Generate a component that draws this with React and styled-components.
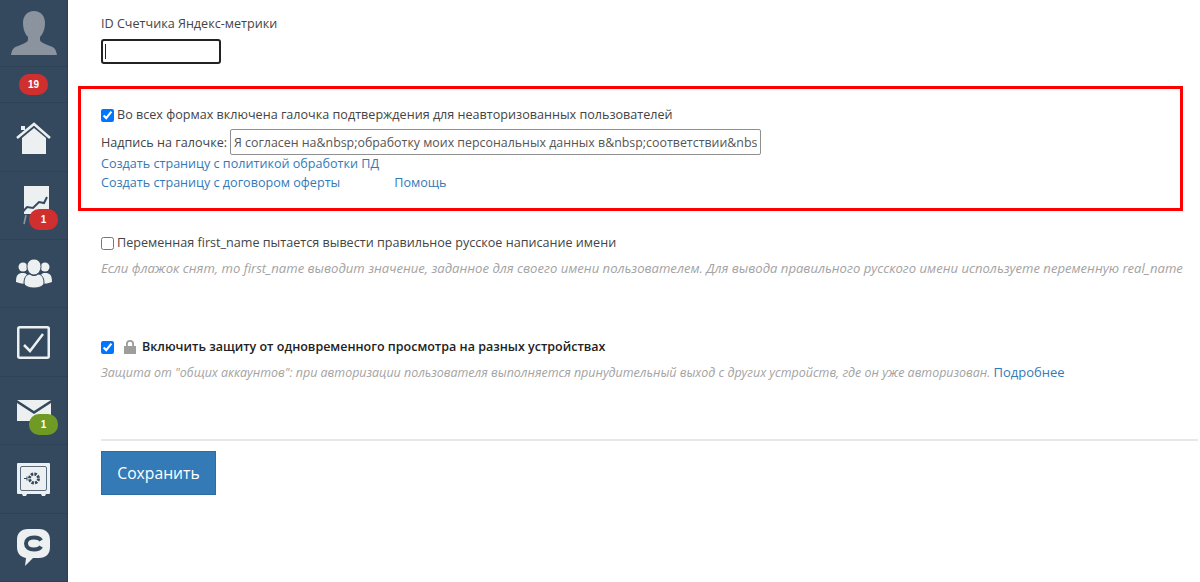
import React from "react"
import styled, { createGlobalStyle } from "styled-components"

const GlobalStyle = createGlobalStyle`
  html, body { margin: 0; padding: 0; height: 100%; background: #fff; overflow: hidden; }
  #root { height: 100%; }
  * { box-sizing: border-box; }
`

const Page = styled.div`
  display: flex;
  width: 1200px;
  height: 582px;
  font-family: "Open Sans", "Liberation Sans", sans-serif;
  font-size: 12.6px;
  color: #444;
`

const Sidebar = styled.nav`
  flex: 0 0 68px;
  display: flex;
  flex-direction: column;
  background: #34495e;
  border-right: 1px solid #2c3e50;
`

const Cell = styled.div`
  position: relative;
  flex: 0 0 ${p => p.$h}px;
  display: flex;
  align-items: center;
  justify-content: center;
  border-bottom: 1px solid #2e4155;
`

const Badge = styled.span`
  display: flex;
  align-items: center;
  justify-content: center;
  width: 29px;
  height: 21px;
  border-radius: 10px;
  background: ${p => (p.$green ? "#6f9a23" : "#d02f2f")};
  color: #fff;
  font-family: "Liberation Sans", sans-serif;
  font-size: 10px;
  font-weight: 700;
`

const FloatBadge = styled(Badge)`
  position: absolute;
  left: 29px;
  top: ${p => p.$top}px;
`

const Main = styled.main`
  flex: 1;
  display: flex;
  flex-direction: column;
  padding: 15px 2px 0 10px;
  min-width: 0;
`

const Section = styled.section`
  padding-left: 23px;
  margin-bottom: ${p => p.$mb || 0}px;
`

const Label = styled.div`
  line-height: 18px;
`

const CounterInput = styled.div`
  width: 120px;
  height: 25px;
  margin-top: 6px;
  border: 2px solid #222;
  border-radius: 3px;
  padding: 3px 2px;
`

const Caret = styled.div`
  width: 1px;
  height: 15px;
  background: #222;
`

const RedBox = styled.div`
  height: 125px;
  margin: 22px 15px 0 0;
  padding: 17px 20px;
  border: 3px solid #f00;
`

const CheckRow = styled.label`
  display: flex;
  align-items: center;
  gap: 3px;
  line-height: 18px;
  margin-top: ${p => p.$mt || 0}px;
  font-size: ${p => (p.$bold ? 12.5 : 12.6)}px;
  font-weight: ${p => (p.$bold ? 600 : 400)};
  color: ${p => (p.$bold ? "#222" : "#444")};
`

const Check = styled.input.attrs({ type: "checkbox" })`
  width: 13px;
  height: 13px;
  margin: 0;
  flex: none;
  accent-color: #0075ff;
`

const PhraseRow = styled.div`
  display: flex;
  align-items: center;
  gap: 3px;
  margin-top: 5px;
`

const TextField = styled.input`
  width: 531px;
  height: 26px;
  padding: 0 3px;
  border: 1px solid #8f8f8f;
  border-radius: 2px;
  font: inherit;
  font-size: 12.4px;
  color: #555;
`

const LinkRow = styled.div`
  display: flex;
  gap: 54px;
  line-height: 17px;
  margin-top: ${p => p.$mt || 0}px;
`

const Link = styled.a`
  color: #337ab7;
  text-decoration: none;
`

const Hint = styled.div`
  margin-top: 7px;
  line-height: 18px;
  font-style: italic;
  font-size: ${p => p.$size}px;
  color: #a3a3a3;
  white-space: nowrap;
`

const HintLink = styled(Link)`
  font-style: normal;
  font-size: 13px;
`

const LockIcon = styled.svg`
  margin: 0 3px 0 7px;
  flex: none;
`

const Rule = styled.hr`
  width: 100%;
  height: 2px;
  margin: 0;
  border: 0;
  background: #e8e8e8;
`

const SaveButton = styled.button`
  display: block;
  width: 115px;
  height: 44px;
  margin-top: 10px;
  padding: 0;
  border: 1px solid #2e6da4;
  background: #337ab7;
  color: #fff;
  font-family: inherit;
  font-size: 15.7px;
`

const UserIcon = () => (
  <svg width="46" height="44" viewBox="0 0 46 44" fill="#8a939e">
    <path d="M23 0c7 0 11 5 11 12 0 6-2 11-5 14v3c0 2 5 4 10 6 4 1 6 3 7 9H0c1-6 3-8 7-9 5-2 10-4 10-6v-3c-3-3-5-8-5-14C12 5 16 0 23 0z" />
  </svg>
)

const HomeIcon = () => (
  <svg width="36" height="33" viewBox="0 0 36 33">
    <path d="M5 5h4v4H5z" fill="#ecf0f1" />
    <path d="M1 17 18 3l16 14" fill="none" stroke="#ecf0f1" strokeWidth="2.5" />
    <path d="M6 17 18 7l12 10v16H6z" fill="#ecf0f1" />
  </svg>
)

const ChartIcon = () => (
  <svg width="30" height="40" viewBox="0 0 30 40">
    <path d="M5 0h25v28H5z" fill="#ecf0f1" />
    <path d="M0 30l8-9 6 1 6-6 5 1 3-6" fill="none" stroke="#34495e" strokeWidth="2" />
    <path d="M5 38l2-9M14 29v5" stroke="#8a97a3" strokeWidth="1.6" />
  </svg>
)

const GroupIcon = () => (
  <svg width="36" height="30" viewBox="0 0 36 30" fill="#ecf0f1">
    <circle cx="7" cy="8" r="4.5" />
    <circle cx="29" cy="8" r="4.5" />
    <path d="M0 23c0-7 2-9 7-9 3 0 5 2 5 5v6c-5 0-9-1-12-2zM36 23c0-7-2-9-7-9-3 0-5 2-5 5v6c5 0 9-1 12-2z" />
    <path d="M18 0c4 0 7 3 7 7.500S22 16 18 16s-7-4-7-8.500S14 0 18 0zM8 24c0-6 3-9 6-9 2 2 6 2 8 0 3 0 6 3 6 9 0 3-5 5-10 5S8 27 8 24z" stroke="#34495e" strokeWidth="1" />
  </svg>
)

const TaskIcon = () => (
  <svg width="33" height="33" viewBox="0 0 33 33">
    <rect x="1.250" y="1.250" width="30.500" height="30.500" rx="1.500" fill="none" stroke="#ecf0f1" strokeWidth="2.500" />
    <path d="M7 19l6 6L26 8" fill="none" stroke="#ecf0f1" strokeWidth="2.500" />
  </svg>
)

const MailIcon = () => (
  <svg width="34" height="21" viewBox="0 0 34 21" fill="#ecf0f1">
    <path d="M0 0h34L17 11z" />
    <path d="M0 3l17 11L34 3v18H0z" />
  </svg>
)

const SafeIcon = () => (
  <svg width="33" height="33" viewBox="0 0 33 33">
    <path d="M1 0h31a1 1 0 0 1 1 1v29a1 1 0 0 1-1 1h-3l-1 2h-3l-1-2H10l-1 2H6l-1-2H1a1 1 0 0 1-1-1V1a1 1 0 0 1 1-1z" fill="#ecf0f1" />
    <rect x="3.500" y="3.500" width="26" height="24" rx="1.500" fill="none" stroke="#5a6c7d" />
    <circle cx="17" cy="15.500" r="4.500" fill="none" stroke="#34495e" strokeWidth="3" strokeDasharray="2.400 1.100" />
    <path d="M7 15.500h3M10 13.500v4" stroke="#34495e" />
  </svg>
)

const ChatIcon = () => (
  <svg width="33" height="37" viewBox="0 0 33 37">
    <path d="M11 0h11c7 0 11 4 11 11v7c0 7-4 11-11 11h-6l-8 8 1-8C4 28 0 25 0 18v-7C0 4 4 0 11 0z" fill="#ecf0f1" />
    <path d="M24 11.500c-1-2-4-3-7-3-5 0-8 2.500-8 6s3 6 8 6c3 0 6-1 7-3" fill="none" stroke="#34495e" strokeWidth="4" />
  </svg>
)

const App = () => (
  <Page>
    <GlobalStyle />
    <Sidebar>
      <Cell $h={67}><UserIcon /></Cell>
      <Cell $h={36}><Badge>19</Badge></Cell>
      <Cell $h={69}><HomeIcon /></Cell>
      <Cell $h={68}>
        <ChartIcon />
        <FloatBadge $top={37}>1</FloatBadge>
      </Cell>
      <Cell $h={68}><GroupIcon /></Cell>
      <Cell $h={69}><TaskIcon /></Cell>
      <Cell $h={68}>
        <MailIcon />
        <FloatBadge $green $top={37}>1</FloatBadge>
      </Cell>
      <Cell $h={69}><SafeIcon /></Cell>
      <Cell $h={68}><ChatIcon /></Cell>
    </Sidebar>
    <Main>
      <Section>
        <Label>ID Счетчика Яндекс-метрики</Label>
        <CounterInput><Caret /></CounterInput>
      </Section>
      <RedBox>
        <CheckRow>
          <Check defaultChecked />
          Во всех формах включена галочка подтверждения для неавторизованных пользователей
        </CheckRow>
        <PhraseRow>
          Надпись на галочке:
          <TextField readOnly value="Я согласен на&amp;nbsp;обработку моих персональных данных в&amp;nbsp;соответствии&amp;nbsp;с политикой" />
        </PhraseRow>
        <LinkRow><Link>Создать страницу с политикой обработки ПД</Link></LinkRow>
        <LinkRow $mt={2}>
          <Link>Создать страницу с договором оферты</Link>
          <Link>Помощь</Link>
        </LinkRow>
      </RedBox>
      <Section $mb={61}>
        <CheckRow $mt={23}>
          <Check />
          Переменная first_name пытается вывести правильное русское написание имени
        </CheckRow>
        <Hint $size={13.1}>Если флажок снят, то first_name выводит значение, заданное для своего имени пользователем. Для вывода правильного русского имени используете переменную real_name</Hint>
      </Section>
      <Section $mb={57}>
        <CheckRow $bold>
          <Check defaultChecked />
          <LockIcon width="12" height="14" viewBox="0 0 12 14" fill="#9d9d9d">
            <path d="M2 6V4a4 4 0 0 1 8 0v2h2v8H0V6zm1.800 0h4.400V4a2.200 2.200 0 0 0-4.400 0z" />
          </LockIcon>
          Включить защиту от одновременного просмотра на разных устройствах
        </CheckRow>
        <Hint $size={12.45}>Защита от "общих аккаунтов": при авторизации пользователя выполняется принудительный выход с других устройств, где он уже авторизован. <HintLink>Подробнее</HintLink></Hint>
      </Section>
      <Section>
        <Rule />
        <SaveButton>Сохранить</SaveButton>
      </Section>
    </Main>
  </Page>
)

export default App
